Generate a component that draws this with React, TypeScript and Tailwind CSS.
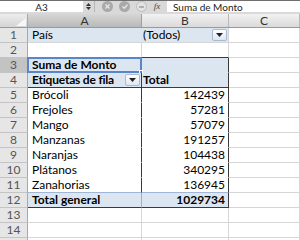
import type { ReactNode } from "react";

const GRID = "border-[#d6d6d6]";
const PIVOT_BG = "bg-[#dce6f1]";

type CellSpec = {
  content?: ReactNode;
  className?: string;
};

type RowSpec = {
  n: number;
  a?: CellSpec;
  b?: CellSpec;
  selected?: boolean;
  hideLabel?: boolean;
};

function DropButton() {
  return (
    <span className="ml-auto mr-[1px] flex h-[12px] w-[15px] items-center justify-center rounded-[2px] border border-[#a9bbd3] bg-gradient-to-b from-white to-[#dfe6ef]">
      <svg width="7" height="4" viewBox="0 0 7 4">
        <path d="M0 0h7L3.5 4z" fill="#222" />
      </svg>
    </span>
  );
}

const fruits: [string, string][] = [
  ["Brócoli", "142439"],
  ["Frejoles", "57281"],
  ["Mango", "57079"],
  ["Manzanas", "191257"],
  ["Naranjas", "104438"],
  ["Plátanos", "340295"],
  ["Zanahorias", "136945"],
];

const rows: RowSpec[] = [
  {
    n: 1,
    a: { content: "País", className: `${PIVOT_BG} border-b-[#d6d6d6] border-r-[#dce6f1]` },
    b: {
      content: (
        <>
          <span>(Todos)</span>
          <DropButton />
        </>
      ),
      className: `${PIVOT_BG} border-b-[#d6d6d6] border-r-[#d6d6d6]`,
    },
  },
  {
    n: 2,
    a: { className: "border-b-[#3a3a3a] border-r-[#d6d6d6]" },
    b: { className: "border-b-[#3a3a3a] border-r-[#d6d6d6]" },
  },
  {
    n: 3,
    selected: true,
    a: { content: "Suma de Monto", className: `${PIVOT_BG} font-bold border-b-[#dce6f1] border-r-[#3a3a3a]` },
    b: { className: `${PIVOT_BG} border-b-[#dce6f1] border-r-[#3a3a3a]` },
  },
  {
    n: 4,
    a: {
      content: (
        <>
          <span className="tracking-[-0.2px]">Etiquetas de fila</span>
          <DropButton />
        </>
      ),
      className: `${PIVOT_BG} font-bold border-b-[#3a3a3a] border-r-[#3a3a3a]`,
    },
    b: { content: "Total", className: `${PIVOT_BG} font-bold border-b-[#3a3a3a] border-r-[#3a3a3a]` },
  },
  ...fruits.map(([name, value], i) => ({
    n: 5 + i,
    a: {
      content: name,
      className: `bg-white border-r-[#3a3a3a] ${i === 6 ? "border-b-[#9fb6d6]" : "border-b-white"}`,
    },
    b: {
      content: value,
      className: `bg-white justify-end pr-[3px] border-r-[#3a3a3a] ${i === 6 ? "border-b-[#9fb6d6]" : "border-b-white"}`,
    },
  })),
  {
    n: 12,
    a: { content: "Total general", className: `${PIVOT_BG} font-bold border-b-[#3a3a3a] border-r-[#9fb0c8]` },
    b: {
      content: "1029734",
      className: `${PIVOT_BG} font-bold justify-end pr-[3px] border-b-[#3a3a3a] border-r-[#3a3a3a]`,
    },
  },
  { n: 13 },
  { n: 14 },
  { n: 15, hideLabel: true },
];

function FormulaBar() {
  return (
    <div className="flex h-[14px] items-start border-t border-[#6f6f6f] bg-[#d9d9d9]">
      <div className="flex h-[11px] w-[83px] items-center justify-center bg-white text-[10px] leading-none text-[#222]">
        A3
      </div>
      <div className="flex h-[11px] w-[12px] flex-col items-center justify-center gap-[1px] border-r border-[#b5b5b5]">
        <svg width="5" height="3" viewBox="0 0 5 3">
          <path d="M0 3h5L2.5 0z" fill="#333" />
        </svg>
        <svg width="5" height="3" viewBox="0 0 5 3">
          <path d="M0 0h5L2.5 3z" fill="#333" />
        </svg>
      </div>
      <div className="flex h-[11px] items-center gap-[6px] pl-[7px]">
        <span className="flex h-[11px] w-[11px] items-center justify-center rounded-full bg-[#a9a9a9]">
          <svg width="5" height="5" viewBox="0 0 5 5">
            <path d="M0.5 0.5l4 4M4.5 0.5l-4 4" stroke="#e6e6e6" strokeWidth="1.3" />
          </svg>
        </span>
        <span className="flex h-[11px] w-[11px] items-center justify-center rounded-full bg-[#a9a9a9]">
          <svg width="6" height="5" viewBox="0 0 6 5">
            <path d="M0.5 2.5l1.8 1.8L5.5 0.7" stroke="#e6e6e6" strokeWidth="1.3" fill="none" />
          </svg>
        </span>
        <span className="flex h-[11px] w-[11px] items-center justify-center rounded-full border border-[#bdbdbd] bg-[#e2e2e2]">
          <span className="h-[2px] w-[5px] border-y border-[#b0b0b0]" />
        </span>
      </div>
      <div className="flex h-[11px] w-[16px] items-center justify-center pl-[4px] font-['Liberation_Serif',serif] text-[9px] italic leading-none text-[#444]">
        fx
      </div>
      <div className="ml-[4px] flex h-[11px] flex-1 items-center bg-white pl-[6px] text-[10px] leading-none text-[#222]">
        Suma de Monto
      </div>
    </div>
  );
}

function ColumnHeaders() {
  return (
    <div className="flex h-[14px] border-b border-[#9a9a9a] text-[12px] leading-none text-[#333]">
      <div className="relative w-[28px] border-r border-[#a8a8a8] bg-gradient-to-b from-[#ededed] to-[#d4d4d4]">
        <svg className="absolute bottom-[1px] right-[1px]" width="10" height="8" viewBox="0 0 10 8">
          <path d="M10 0v8H0z" fill="#f7f7f7" />
        </svg>
      </div>
      <div className="flex w-[114px] items-center justify-center border-r border-[#a0a0a0] bg-gradient-to-b from-[#d6d6d6] to-[#b9b9b9]">
        A
      </div>
      <div className="flex w-[87px] items-center justify-center border-r border-[#b8b8b8] bg-gradient-to-b from-[#f2f2f2] to-[#dadada]">
        B
      </div>
      <div className="flex flex-1 items-center justify-center border-r border-[#b8b8b8] bg-gradient-to-b from-[#f2f2f2] to-[#dadada]">
        C
      </div>
    </div>
  );
}

function SheetRow({ row }: { row: RowSpec }) {
  const a = row.a ?? { className: `border-b-[#d6d6d6] border-r-[#d6d6d6]` };
  const b = row.b ?? { className: `border-b-[#d6d6d6] border-r-[#d6d6d6]` };
  return (
    <div className="flex h-[15px] text-[12px] leading-none text-black">
      <div
        className={`flex w-[28px] items-center justify-center border-b border-r border-b-[#c4c4c4] border-r-[#a8a8a8] text-[#555] ${
          row.selected ? "bg-[#c3c3c3]" : "bg-[#e6e6e6]"
        }`}
      >
        {row.hideLabel ? null : row.n}
      </div>
      <div className={`relative flex w-[114px] items-center border-b border-r pl-[4px] ${a.className ?? ""}`}>
        {a.content}
        {row.selected && (
          <span className="pointer-events-none absolute -left-[1px] -right-[1px] -top-[1px] bottom-[-1px] border-2 border-[#5a84cc]">
            <span className="absolute -bottom-[3px] -right-[3px] h-[4px] w-[4px] border border-white bg-[#5a84cc]" />
          </span>
        )}
      </div>
      <div className={`flex w-[87px] items-center border-b border-r pl-[1px] ${b.className ?? ""}`}>
        {b.content}
      </div>
      <div className={`flex-1 border-b border-r ${GRID}`} />
    </div>
  );
}

export default function App() {
  return (
    <div className="h-[240px] w-[300px] overflow-hidden bg-white font-['Lato',sans-serif]">
      <FormulaBar />
      <ColumnHeaders />
      {rows.map((r) => (
        <SheetRow key={r.n} row={r} />
      ))}
    </div>
  );
}
